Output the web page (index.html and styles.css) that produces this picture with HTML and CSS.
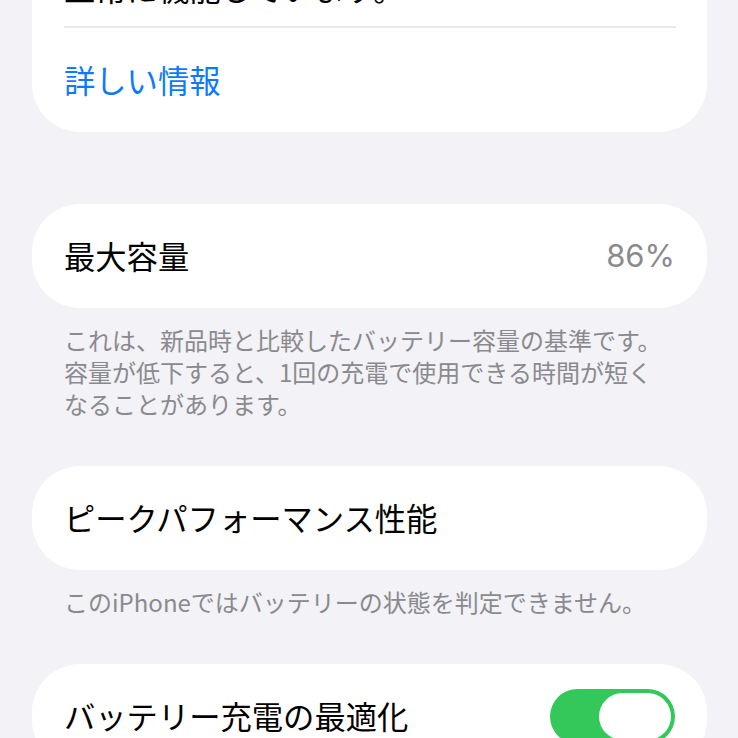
FILE: index.html
```html
<!DOCTYPE html>
<html lang="ja">

<head>
    <meta charset="UTF-8">
    <meta name="viewport" content="width=device-width, initial-scale=1.0">
    <title>バッテリーの状態</title>
    <link rel="stylesheet" href="styles.css">
</head>

<body>
    <div class="page">
        <div class="card">
            <div class="row row-top">正常に機能しています。</div>
            <div class="sep"></div>
            <div class="row link">詳しい情報</div>
        </div>

        <div class="card card-gap">
            <div class="row">
                <span>最大容量</span>
                <span class="value">86%</span>
            </div>
        </div>
        <p class="note">これは、新品時と比較したバッテリー容量の基準です。<br>容量が低下すると、1回の充電で使用できる時間が短く<br>なることがあります。</p>

        <div class="card">
            <div class="row">ピークパフォーマンス性能</div>
        </div>
        <p class="note">このiPhoneではバッテリーの状態を判定できません。</p>

        <div class="card">
            <div class="row">
                <span>バッテリー充電の最適化</span>
                <span class="switch on"><span class="knob"></span></span>
            </div>
        </div>
    </div>
</body>

</html>
```

FILE: styles.css
```css
body {
    margin: 0;
    background-color: #f2f2f7;
    font-family: "Noto Sans CJK JP", "Noto Sans", sans-serif;
    color: #000;
    overflow: hidden;
}

.page {
    margin-top: -49px;
    padding: 0 31px 0 32px;
}

.card {
    background-color: #fff;
    border-radius: 48px;
    padding: 0 32px;
}

.card-gap {
    margin-top: 72px;
}

.row {
    height: 104px;
    display: flex;
    align-items: center;
    justify-content: space-between;
    font-size: 31.3px;
    line-height: 40px;
}

/* 上の行は画面外に切れている */
.row-top {
    height: auto;
    padding: 17px 0 18px;
}

.sep {
    height: 2px;
    background-color: #e9e9ee;
    margin-right: -1px;
}

.link {
    color: #0a7aff;
}

.value {
    font-family: Inter, "Noto Sans", sans-serif;
    font-size: 31px;
    color: #8a8a8e;
}

.note {
    margin: 0;
    padding: 16px 0 46px 32px;
    font-size: 24px;
    line-height: 32px;
    color: #8a8a8e;
}

.switch {
    width: 125px;
    height: 55px;
    border-radius: 28px;
    background-color: #e9e9ea;
    display: flex;
    align-items: center;
    padding: 0 4px;
    box-sizing: border-box;
}

.switch.on {
    background-color: #34c759;
    justify-content: flex-end;
}

.knob {
    width: 72px;
    height: 47px;
    border-radius: 24px;
    background-color: #fff;
}
```
